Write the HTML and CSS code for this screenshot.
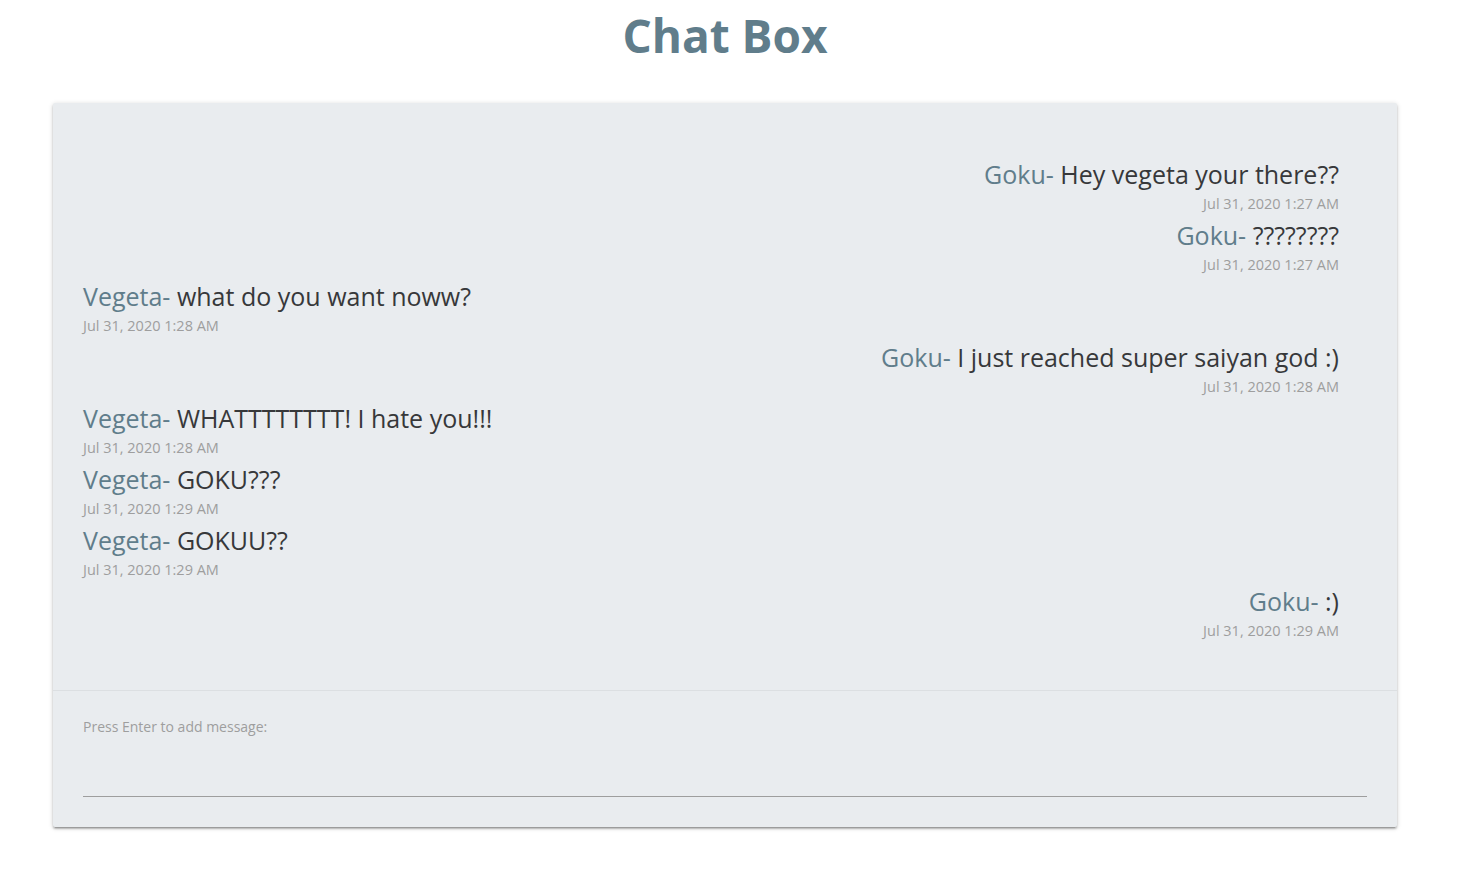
FILE: index.html
```html
<!DOCTYPE html>
<html>
<head>
<meta charset="utf-8">
<link rel="stylesheet" href="styles.css">
</head>
<body>
<h1 class="title">Chat Box</h1>
<div class="card">
  <div class="messages">
    <div class="msg right"><div class="line"><span class="name">Goku- </span>Hey vegeta your there??</div><div class="time">Jul 31, 2020 1:27 AM</div></div>
    <div class="msg right"><div class="line"><span class="name">Goku- </span>????????</div><div class="time">Jul 31, 2020 1:27 AM</div></div>
    <div class="msg"><div class="line"><span class="name">Vegeta- </span>what do you want noww?</div><div class="time">Jul 31, 2020 1:28 AM</div></div>
    <div class="msg right"><div class="line"><span class="name">Goku- </span>I just reached super saiyan god :)</div><div class="time">Jul 31, 2020 1:28 AM</div></div>
    <div class="msg"><div class="line"><span class="name">Vegeta- </span>WHATTTTTTTT! I hate you!!!</div><div class="time">Jul 31, 2020 1:28 AM</div></div>
    <div class="msg"><div class="line"><span class="name">Vegeta- </span>GOKU???</div><div class="time">Jul 31, 2020 1:29 AM</div></div>
    <div class="msg"><div class="line"><span class="name">Vegeta- </span>GOKUU??</div><div class="time">Jul 31, 2020 1:29 AM</div></div>
    <div class="msg right"><div class="line"><span class="name">Goku- </span>:)</div><div class="time">Jul 31, 2020 1:29 AM</div></div>
  </div>
  <div class="composer">
    <label class="label" for="m">Press Enter to add message:</label>
    <input id="m" class="input" type="text">
  </div>
</div>
</body>
</html>
```
FILE: styles.css
```css
html, body {
  margin: 0;
  padding: 0;
  background: #ffffff;
  font-family: "Open Sans", "Noto Sans", sans-serif;
}
body {
  min-height: 891px;
  padding-bottom: 40px;
  box-sizing: border-box;
}
.title {
  margin: 0;
  padding-top: 7px;
  height: 103px;
  box-sizing: border-box;
  text-align: center;
  font-size: 46px;
  line-height: 56px;
  font-weight: 700;
  color: #607d8b;
  width: 1450px;
}
.card {
  margin-left: 53px;
  width: 1344px;
  background: #e9ecef;
  border-radius: 2px;
  box-shadow: 0 2px 2px 0 rgba(0,0,0,0.2), 0 3px 1px -2px rgba(0,0,0,0.16), 0 1px 5px 0 rgba(0,0,0,0.18);
}
.messages {
  height: 588px;
  box-sizing: border-box;
  padding: 53px 58px 0 30px;
  display: flex;
  flex-direction: column;
  border-bottom: 1px solid #dcdfe2;
}
.msg {
  display: flex;
  flex-direction: column;
  align-items: flex-start;
  height: 61px;
}
.msg.right { align-items: flex-end; }
.line {
  font-size: 25px;
  line-height: 36px;
  color: #37383a;
}
.name { color: #607d8b; }
.time {
  font-size: 14.5px;
  line-height: 23px;
  color: #9e9e9e;
}
.composer {
  padding: 26px 30px 30px 30px;
  display: flex;
  flex-direction: column;
}
.label {
  font-size: 14px;
  line-height: 20px;
  color: #9e9e9e;
}
.input {
  display: block;
  box-sizing: border-box;
  margin: 0;
  height: 60px;
  border: none;
  border-bottom: 1px solid #9e9e9e;
  background: transparent;
  outline: none;
  padding: 0;
  font: inherit;
}
```
